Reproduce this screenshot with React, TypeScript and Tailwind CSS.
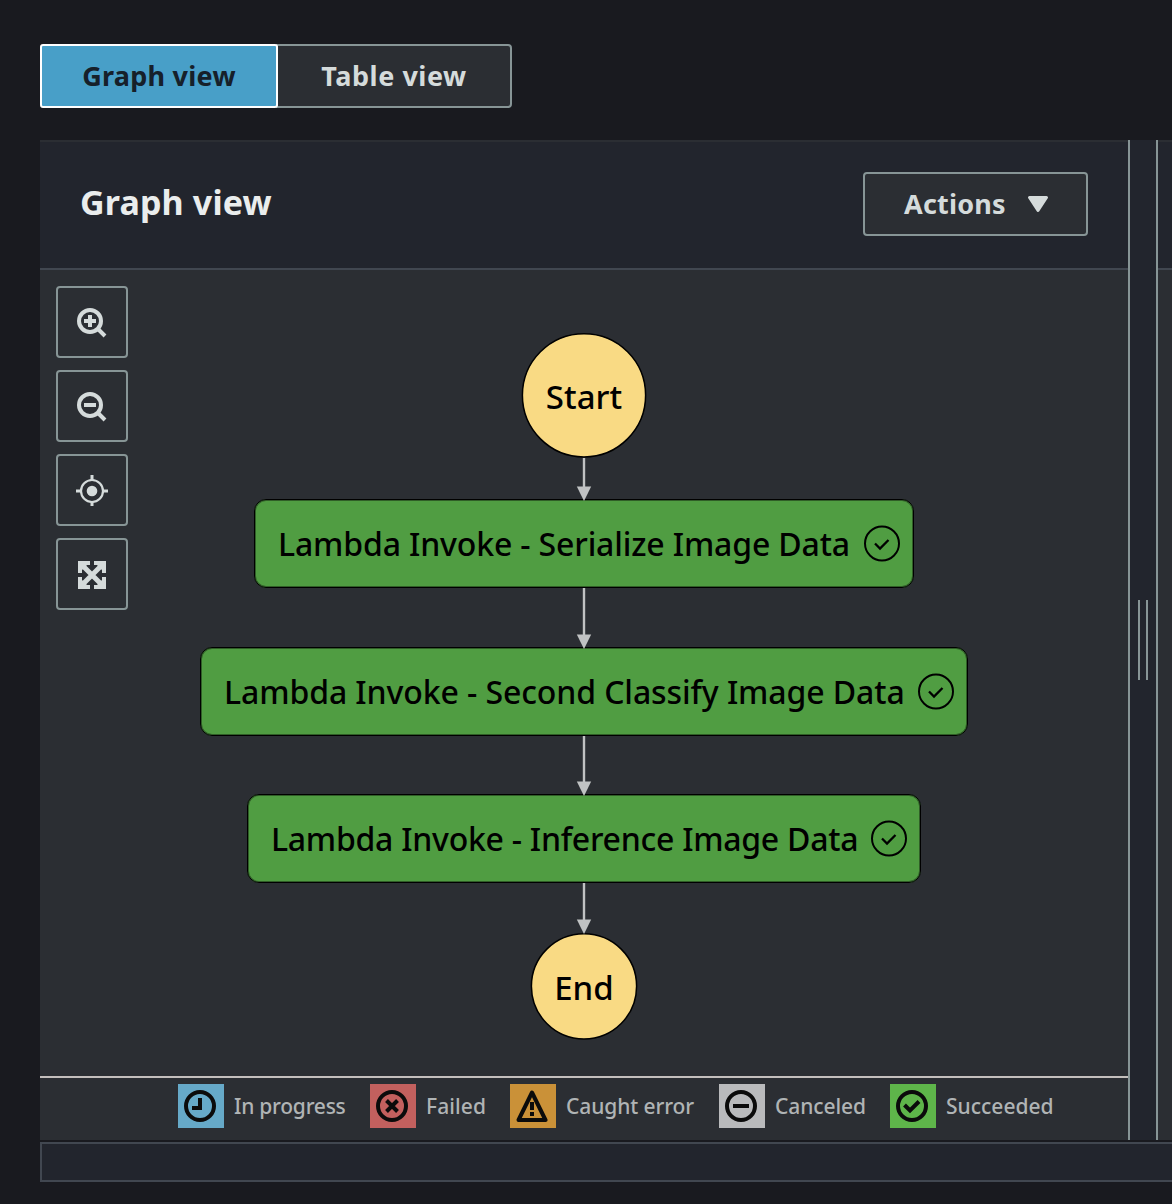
import React from "react";

const FONT = "font-['Noto_Sans','Open_Sans',sans-serif]";

function ToolButton({ label, children }: { label: string; children: React.ReactNode }) {
  return (
    <button
      aria-label={label}
      className="flex h-[72px] w-[72px] items-center justify-center rounded-[4px] border-2 border-[#879596] text-[#d5dbdb]"
    >
      <svg width="32" height="32" viewBox="0 0 32 32" fill="none" stroke="currentColor" strokeWidth="4">
        {children}
      </svg>
    </button>
  );
}

function Arrow({ length }: { length: number }) {
  return (
    <svg
      className="relative z-10 -mb-[2px] block shrink-0"
      width="16"
      height={length + 2}
      viewBox={`0 0 16 ${length + 2}`}
    >
      <path d={`M8 0V${length - 10}`} stroke="#c0c2c3" strokeWidth="2.4" />
      <path d={`M0.8 ${length - 12.5}H15.2L8 ${length + 2}Z`} fill="#c0c2c3" />
    </svg>
  );
}

function Terminal({ name, size }: { name: string; size: number }) {
  return (
    <div
      className="relative flex shrink-0 items-center justify-center text-[33px] font-medium text-black"
      style={{ width: size, height: size }}
    >
      <svg className="absolute inset-0" width={size} height={size} viewBox={`0 0 ${size} ${size}`}>
        <circle
          cx={size / 2}
          cy={size / 2 + 0.3}
          r={size / 2 - 1.4}
          fill="#f9da84"
          stroke="#000"
          strokeWidth="1.5"
        />
      </svg>
      <span className="relative top-[2px]">{name}</span>
    </div>
  );
}

function StateNode({ name, className }: { name: string; className: string }) {
  return (
    <div
      className={`flex h-[89px] shrink-0 items-center justify-between rounded-[12px] border border-black bg-[#509d42] pr-[12px] pl-[23px] shadow-[inset_0_0_0_1px_rgba(0,0,0,0.4)] ${className}`}
    >
      <span className="text-[32px] leading-[44px] font-medium whitespace-nowrap text-black">{name}</span>
      <svg
        className="shrink-0"
        width="38"
        height="38"
        viewBox="0 0 38 38"
        fill="none"
        stroke="#000"
        strokeWidth="2"
      >
        <circle cx="19" cy="18.5" r="17" />
        <path d="M12 18.5L17 23.5L25.5 15" strokeWidth="2.3" />
      </svg>
    </div>
  );
}

function LegendItem({
  label,
  color,
  className,
  children,
}: {
  label: string;
  color: string;
  className: string;
  children: React.ReactNode;
}) {
  return (
    <div className={`flex shrink-0 items-center gap-[10px] ${className}`}>
      <span className={`flex h-[44px] w-[46px] items-center pl-[6px] ${color}`}>
        <svg width="32" height="32" viewBox="0 0 32 32" fill="none" stroke="#0b0b0b" strokeWidth="4">
          {children}
        </svg>
      </span>
      <span className="pt-[2px] text-[21px] font-medium whitespace-nowrap text-[#b0b4b5]">{label}</span>
    </div>
  );
}

export default function App() {
  return (
    <div className={`flex h-[1204px] w-[1172px] flex-col overflow-hidden bg-[#191a1f] pt-[44px] pl-[40px] ${FONT}`}>
      <div className="flex h-[64px] shrink-0 text-[27px] font-bold">
        <button className="relative z-10 w-[238px] rounded-[3px] border-2 border-white bg-[#489fc8] tracking-[0.25px] text-[#16202a]">
          Graph view
        </button>
        <button className="-ml-[2px] w-[236px] rounded-r-[4px] border-2 border-[#879596] bg-[#2b2e33] tracking-[0.55px] text-[#d5dbdb]">
          Table view
        </button>
      </div>

      <div className="mt-[32px] flex h-[1000px] shrink-0">
        <section className="flex w-[1088px] shrink-0 flex-col bg-[#2b2e33]">
          <header className="flex h-[130px] shrink-0 items-start justify-between border-t-2 border-b-2 border-t-[#2b2e33] border-b-[#414750] bg-[#22252d] px-[40px] pt-[30px]">
            <h2 className="mt-[8px] text-[34px] leading-[44px] font-bold tracking-[0.15px] text-[#eaeded]">Graph view</h2>
            <button className="flex h-[64px] w-[225px] items-center justify-between rounded-[4px] border-2 border-[#879596] bg-[#2b2e33] pr-[37px] pl-[39px] text-[27px] font-bold tracking-[0.2px] text-[#d5dbdb]">
              Actions
              <svg width="22" height="18" viewBox="0 0 22 18">
                <path
                  d="M2.5 2.5H19.5L11 15.5Z"
                  fill="currentColor"
                  stroke="currentColor"
                  strokeWidth="3"
                  strokeLinejoin="round"
                />
              </svg>
            </button>
          </header>

          <div className="relative flex grow flex-col items-center pt-[62px]">
            <div className="absolute top-[16px] left-[16px] flex flex-col gap-[12px]">
              <ToolButton label="Zoom in">
                <circle cx="14" cy="15" r="11" />
                <path d="M21.5 22.5L29 30M8 15H20M14 9V21" />
              </ToolButton>
              <ToolButton label="Zoom out">
                <circle cx="14" cy="15" r="11" />
                <path d="M21.5 22.5L29 30M8 15H20" />
              </ToolButton>
              <ToolButton label="Center">
                <circle cx="16" cy="17" r="11" strokeWidth="2.2" />
                <circle cx="16" cy="17" r="5.3" fill="currentColor" stroke="none" />
                <path d="M16 1V6M16 28V33M0 17H5M27 17H32" strokeWidth="3" />
              </ToolButton>
              <ToolButton label="Fit to screen">
                <path d="M5 6L27 28M27 6L5 28" strokeWidth="5" />
                <path
                  d="M2 15V3H14V7H11L6 12V15ZM18 3H30V15H26V12L21 7H18ZM2 19V31H14V27H11L6 22V19ZM30 19V31H18V27H21L26 22V19Z"
                  fill="currentColor"
                  stroke="none"
                />
              </ToolButton>
            </div>

            <Terminal name="Start" size={126} />
            <Arrow length={41} />
            <StateNode name="Lambda Invoke - Serialize Image Data" className="w-[660px] tracking-[-0.15px]" />
            <Arrow length={59} />
            <StateNode name="Lambda Invoke - Second Classify Image Data" className="w-[768px] tracking-[-0.1px]" />
            <Arrow length={58} />
            <StateNode name="Lambda Invoke - Inference Image Data" className="w-[674px] tracking-[-0.26px]" />
            <Arrow length={49} />
            <Terminal name="End" size={108} />
          </div>

          <footer className="flex h-[64px] shrink-0 items-start border-t-2 border-[#c4bfbd] pt-[6px] pl-[138px]">
            <LegendItem label="In progress" color="bg-[#66a9c8]" className="w-[192px] tracking-[-0.25px]">
              <circle cx="16" cy="16" r="14" />
              <path d="M16 8V18H8" />
            </LegendItem>
            <LegendItem label="Failed" color="bg-[#c2605e]" className="w-[140px] tracking-[0.1px]">
              <circle cx="16" cy="16" r="14" />
              <path d="M10.5 10.5L21.5 21.5M21.5 10.5L10.5 21.5" />
            </LegendItem>
            <LegendItem label="Caught error" color="bg-[#ca9138]" className="w-[209px] tracking-[-0.1px]">
              <path d="M16 2.5L29.5 30H2.5Z" strokeLinejoin="round" />
              <path d="M16 12V20M16 22V26" />
            </LegendItem>
            <LegendItem label="Canceled" color="bg-[#b9babc]" className="w-[171px] tracking-[-0.1px]">
              <circle cx="16" cy="16" r="14" />
              <path d="M8 16H24" />
            </LegendItem>
            <LegendItem label="Succeeded" color="bg-[#5eb54a]" className="w-[180px]">
              <circle cx="16" cy="16" r="14" />
              <path d="M8.5 15L14 20.5L23 11.5" />
            </LegendItem>
          </footer>
        </section>

        <div className="flex w-[30px] shrink-0 items-start justify-center gap-[6px] border-x-2 border-[#879596] bg-[#22252d] pt-[460px]">
          <span className="h-[80px] w-[2px] bg-[#879596]" />
          <span className="h-[80px] w-[2px] bg-[#879596]" />
        </div>

        <section className="flex grow flex-col bg-[#2b2e33]">
          <div className="h-[130px] border-t-2 border-b-2 border-t-[#2b2e33] border-b-[#414750] bg-[#22252d]" />
        </section>
      </div>

      <div className="mt-[2px] h-[40px] shrink-0 border-2 border-r-0 border-[#414750] bg-[#22252d]" />
    </div>
  );
}
